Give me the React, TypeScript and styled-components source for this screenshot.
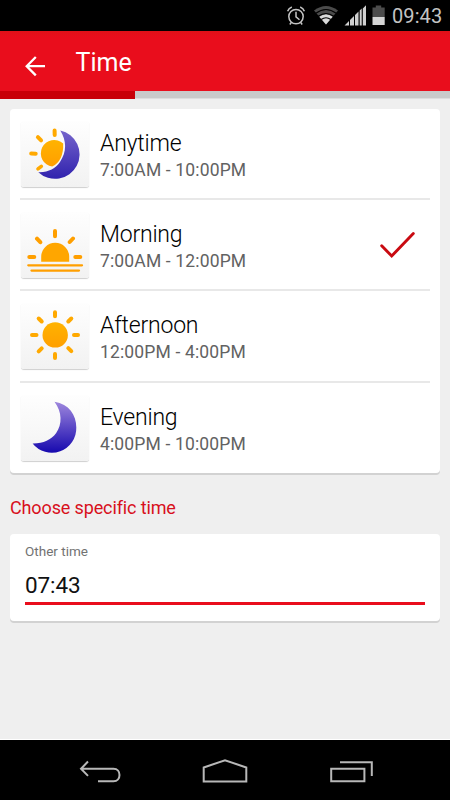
import React from "react";
import styled, { createGlobalStyle } from "styled-components";

const Global = createGlobalStyle`
  * { box-sizing: border-box; }
  body { margin: 0; background: #000; font-family: Roboto, "Noto Sans", sans-serif; }
`;

const Screen = styled.div`
  width: 450px;
  height: 800px;
  display: flex;
  flex-direction: column;
  background: #efefef;
  overflow: hidden;
`;

const StatusBar = styled.div`
  height: 31px;
  flex: none;
  display: flex;
  justify-content: flex-end;
  background: #000;
`;

const Clock = styled.span`
  width: 58px;
  font-size: 20px;
  line-height: 32px;
  letter-spacing: 0.1px;
  color: #c4c4c4;
`;

const Header = styled.header`
  height: 60px;
  flex: none;
  display: flex;
  background: linear-gradient(#e01018, #e90d1c 6px);
`;

const BackButton = styled.button`
  width: 75.500px;
  padding: 0;
  border: 0;
  background: none;
  display: flex;
`;

const Title = styled.h1`
  margin: 0;
  font-size: 25px;
  font-weight: 400;
  line-height: 64px;
  letter-spacing: 0;
  color: #fff;
`;

const Track = styled.div`
  height: 8px;
  flex: none;
  background: #c9caca;
  border-bottom: 1px solid #dedede;
`;

const Fill = styled.div`
  width: 135px;
  height: 8px;
  background: #c80008;
`;

const Content = styled.main`
  flex: 1;
  padding: 10px 10px 0;
  border-bottom: 1px solid #fff;
`;

const Card = styled.section<{ $height: number }>`
  height: ${(p) => p.$height}px;
  background: #fff;
  border-radius: 4px;
  box-shadow: 0 2px 0 #d2d2d2;
`;

const Row = styled.div`
  height: 91.2px;
  margin: 0 10px;
  padding: 12px 0 0 1px;
  display: flex;
  border-bottom: 2px solid #e8e8e8;
  &:last-child { border-bottom: 0; }
`;

const Tile = styled.div`
  width: 68px;
  height: 66px;
  flex: none;
  border-radius: 3px;
  background: linear-gradient(#fefefe, #f2f2f2);
  box-shadow: 0 1px 1px #cfcfcf;
  svg { display: block; }
`;

const Labels = styled.div`
  margin-left: 11px;
  flex: 1;
  padding-top: 9px;
`;

const Name = styled.div`
  font-size: 23px;
  font-weight: 300;
  line-height: 28px;
  letter-spacing: -0.2px;
  color: #000;
`;

const Hours = styled.div`
  font-size: 17.5px;
  line-height: 24px;
  letter-spacing: 0.15px;
  color: #626262;
`;

const CheckSlot = styled.div`
  width: 52px;
  padding-top: 18px;
`;

const SectionTitle = styled.h2`
  margin: 2px 0 0;
  height: 59px;
  font-size: 18px;
  font-weight: 400;
  line-height: 65px;
  letter-spacing: -0.13px;
  color: #d80f1c;
`;

const Field = styled.label`
  display: block;
  padding: 9px 15px 0;
`;

const FieldLabel = styled.span`
  display: block;
  font-size: 13.5px;
  line-height: 17px;
  color: #727272;
`;

const FieldValue = styled.div`
  height: 45px;
  font-size: 22.5px;
  line-height: 50px;
  letter-spacing: -0.1px;
  color: #111;
  border-bottom: 3px solid #e90d1c;
`;

const NavBar = styled.nav`
  height: 60px;
  flex: none;
  display: flex;
  justify-content: space-between;
  padding: 0 60px;
  background: #000;
`;

const StatusIcons = () => (
  <svg width="107" height="31" viewBox="285 0 107 31" fill="none" stroke="#c4c4c4">
    <circle cx="296" cy="16.6" r="7.2" strokeWidth="1.5" />
    <path d="M296 11.8v5l3.500 3" strokeWidth="1.500" />
    <path d="M287.600 11.300q1-3 4.200-4.300M304.400 11.300q-1-3-4.200-4.300M291.500 22.300l-1.700 2.200M300.500 22.300l1.700 2.200" strokeWidth="1.500" />
    <path d="M326 24.500L314 10.500Q326 1.500 338 10.500Z" fill="#4b4b4b" stroke="none" />
    <path d="M326 24.500L319.300 16.800Q326 11.500 332.700 16.800Z" fill="#dadada" stroke="none" />
    <path d="M315.800 13.300Q326 5.800 336.200 13.300M318.300 16.200Q326 10.800 333.700 16.200M321.200 19.500Q326 16 330.800 19.500" stroke="#000" strokeWidth="1.100" />
    <g fill="#d0d0d0" stroke="none">
      <path d="M344.500 25.500l4.500-4.500v4.500zM350 20l4-4v9.500h-4zM355 15l3.500-3.500v14H355zM359.700 10.500l2-2v17h-2zM362.800 8.500l3.200-3.200v20.200h-3.200z" />
    </g>
    <path d="M372.500 17V7.500h3.300v-2h5.400v2h3.500V17z" fill="#4c4c4c" stroke="none" />
    <path d="M372.500 17h12.200v8h-12.200z" fill="#d5d5d5" stroke="none" />
  </svg>
);

const Gradients = () => (
  <defs>
    <linearGradient id="sun" x1="0" y1="6" x2="0" y2="58" gradientUnits="userSpaceOnUse">
      <stop stopColor="#ffbd00" />
      <stop offset="1" stopColor="#ff9500" />
    </linearGradient>
    <linearGradient id="moon" x1="0" y1="8" x2="0" y2="58" gradientUnits="userSpaceOnUse">
      <stop stopColor="#9b84dc" />
      <stop offset="1" stopColor="#1608ae" />
    </linearGradient>
    <linearGradient id="dusk" x1="0" y1="8" x2="0" y2="58" gradientUnits="userSpaceOnUse">
      <stop stopColor="#7766cc" />
      <stop offset="1" stopColor="#3022ae" />
    </linearGradient>
  </defs>
);

const AnytimeIcon = () => (
  <svg width="68" height="66">
    <Gradients />
    <path d="M39.300 9.400A24.500 24.500 0 1 1 17.300 51.200C27 51.700 34.500 47.500 39 41C45.500 31.500 46 20 39.300 9.400Z" fill="url(#dusk)" />
    <path d="M42.200 22.400A13.400 13.400 0 1 0 31.200 45.600Q42.800 39.500 42.200 22.400Z" fill="url(#sun)" />
    <g stroke="#ffa900" strokeWidth="4" strokeLinecap="round" fill="none">
      <path d="M33.600 9.500L33.700 14M16.900 16.200l3.200 3.200M10.200 32.600l4.500.1" />
      <path d="M20.300 45.400L17 47.900" strokeWidth="3.600" />
    </g>
  </svg>
);

const MorningIcon = () => (
  <svg width="68" height="66" fill="none" stroke="#ff9f00" strokeLinecap="round">
    <path d="M20.200 49.700V44.800a14 14 0 0 1 28 0v4.900z" fill="#ffa600" stroke="none" />
    <path d="M34 19v5.300M16 26.700l3.300 3.500M52 26.500l-3.300 3.500M8.300 45h5M54.300 45h5" strokeWidth="4" />
    <path d="M7.300 53.300H61M10.500 58.600h47.500" strokeWidth="2.300" />
  </svg>
);

const AfternoonIcon = () => (
  <svg width="68" height="66">
    <Gradients />
    <circle cx="34.200" cy="31.900" r="12.700" fill="url(#sun)" />
    <g stroke="#ffa900" strokeWidth="4" strokeLinecap="round">
      <path d="M34 9.200v4M34 51v4M11 31.900h4.500M53 31.900h4M17.700 15.500l3 3M50.300 15.500l-3 3M17.700 48.300l3-3M50.300 48.100l-3-3" />
    </g>
  </svg>
);

const EveningIcon = () => (
  <svg width="68" height="66">
    <Gradients />
    <path d="M33.500 6.800C48 9 55.300 20 55.300 32.500A24.500 24.500 0 0 1 11.600 48.400C22 48.600 30 45 35.200 38C41.300 29.500 41.200 17 33.500 6.800Z" fill="url(#moon)" />
  </svg>
);

const Check = () => (
  <svg width="40" height="30" viewBox="378 230 40 30">
    <path d="M381.700 245.700l10 10.300L413.300 233.500" fill="none" stroke="#c90a11" strokeWidth="2.900" strokeLinecap="round" />
  </svg>
);

const slots = [
  { name: "Anytime", hours: "7:00AM - 10:00PM", Icon: AnytimeIcon },
  { name: "Morning", hours: "7:00AM - 12:00PM", Icon: MorningIcon, checked: true },
  { name: "Afternoon", hours: "12:00PM - 4:00PM", Icon: AfternoonIcon },
  { name: "Evening", hours: "4:00PM - 10:00PM", Icon: EveningIcon },
];

export default function App() {
  return (
    <Screen>
      <Global />
      <StatusBar>
        <StatusIcons />
        <Clock>09:43</Clock>
      </StatusBar>
      <Header>
        <BackButton aria-label="Back">
          <svg width="75" height="60" viewBox="0 31 75 60">
            <path d="M45 66.200H27M35.800 57L26.700 66.200L35.800 75.400" fill="none" stroke="#fff" strokeWidth="2.300" />
          </svg>
        </BackButton>
        <Title>Time</Title>
      </Header>
      <Track><Fill /></Track>
      <Content>
        <Card $height={364}>
          {slots.map(({ name, hours, Icon, checked }) => (
            <Row key={name}>
              <Tile><Icon /></Tile>
              <Labels>
                <Name>{name}</Name>
                <Hours>{hours}</Hours>
              </Labels>
              {checked && <CheckSlot><Check /></CheckSlot>}
            </Row>
          ))}
        </Card>
        <SectionTitle>Choose specific time</SectionTitle>
        <Card $height={87}>
          <Field>
            <FieldLabel>Other time</FieldLabel>
            <FieldValue>07:43</FieldValue>
          </Field>
        </Card>
      </Content>
      <NavBar>
        <svg width="80" height="60" viewBox="60 740 80 60" fill="none" stroke="#b8b8b8" strokeWidth="2">
          <path d="M88 761.500l-7 7.200 7 7.200M81 768.700h32.500c8 0 8 12.600 0 12.600H98" />
        </svg>
        <svg width="80" height="60" viewBox="185 740 80 60" fill="none" stroke="#b8b8b8" strokeWidth="2">
          <path d="M203.700 781.500V767.500L225 760.200l21.300 7.300v14z" />
        </svg>
        <svg width="80" height="60" viewBox="310 740 80 60" fill="none" stroke="#b8b8b8" strokeWidth="2">
          <path d="M331.200 768.700h33.200v12.500h-33.200zM340 762.300h31.800V776" />
        </svg>
      </NavBar>
    </Screen>
  );
}
